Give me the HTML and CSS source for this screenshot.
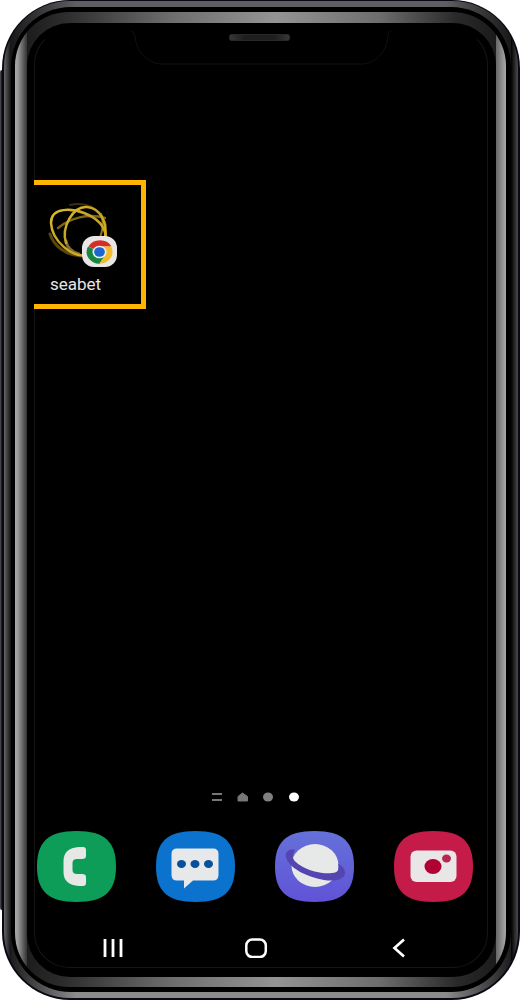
FILE: index.html
```
<!DOCTYPE html>
<html lang="en">
<head>
<meta charset="utf-8">
<meta name="viewport" content="width=device-width, initial-scale=1">
<title>Home screen</title>
<link rel="stylesheet" href="styles.css">
</head>
<body>
<div class="phone">
  <div class="rim">
    <div class="groove">
      <div class="bezel">
        <div class="glass">
          <main class="screen">
            <svg class="notch" viewBox="0 0 260 36" aria-hidden="true">
              <path d="M0 1Q3 1 4 6C5 22 17 34 31 34H230C244 34 256 22 257 6Q257 1 260 1" fill="none" stroke="#111"/>
              <defs><linearGradient id="speaker"><stop stop-color="#383838"/><stop offset=".25" stop-color="#1e1e1e"/><stop offset=".75" stop-color="#1e1e1e"/><stop offset="1" stop-color="#383838"/></linearGradient></defs>
              <rect x="98.500" y="4.500" width="60" height="6" rx="2" fill="url(#speaker)" stroke="#292929"/>
            </svg>
            <a class="shortcut" href="#seabet">
              <svg class="shortcut-icon" viewBox="0 0 72 68" aria-hidden="true">
                <defs><linearGradient id="gold" x2="1" y2="1"><stop stop-color="#e0be22"/><stop offset=".45" stop-color="#c3a12a"/><stop offset="1" stop-color="#e0b416"/></linearGradient></defs>
                <g fill="none" stroke-linecap="round">
                  <path d="M24 4C42 0 56 9 60 24" stroke="#3b3008" stroke-width="2"/>
                  <path d="M4 33C8 45 19 54 35 55" stroke="#5a480b" stroke-width="3"/>
                  <path d="M12 27C24 17 42 12 59 17" stroke="#7d6512" stroke-width="2.500"/>
                  <path d="M20 40C21 46 26 51 33 53" stroke="#7f6c30" stroke-width="3"/>
                  <path d="M55 13Q59 22 54 37" stroke="#8f7424" stroke-width="2"/>
                  <path d="M41 54C26 57 6 40 5 22C5 5 27 8 38 12C51 17 59 25 60 36" stroke="url(#gold)" stroke-width="2.500"/>
                  <path d="M20 42C15 26 27 5 41 6C53 7 62 20 59 37" stroke="url(#gold)" stroke-width="2.500"/>
                </g>
                <rect x="36" y="35" width="35" height="31" rx="12" fill="#e9e6e5"/>
                <g transform="translate(53.5 51) scale(1 .9)">
                  <path d="M0 0L-11 -6A13 13 0 0 1 12 -6H0Z" fill="#d32f27"/>
                  <path d="M0 0L-11.5 -6A13 13 0 0 0 0 13L6 3Z" fill="#168740"/>
                  <path d="M0 -6H11.6A13 13 0 0 1 0 13L6 3Z" fill="#f3bb28"/>
                  <circle r="7" fill="#eee"/><circle r="5.4" fill="#1d66d2"/>
                </g>
              </svg>
              <span class="shortcut-name">seabet</span>
            </a>
            <div class="lower">
              <svg class="pages" viewBox="0 0 88 12" aria-hidden="true">
                <path d="M1 3H11M1 9H11" stroke="#777" stroke-width="2"/>
                <path d="M27 5.500L31.500 2L36.500 5.500V10H27Z" fill="#777" stroke="#777" stroke-linejoin="round"/>
                <ellipse cx="57" cy="6" rx="5" ry="4.500" fill="#808080"/>
                <ellipse cx="83" cy="6" rx="5" ry="4.500" fill="#fff"/>
              </svg>
              <nav class="dock" aria-label="Apps">
                <a href="#phone" aria-label="Phone"><svg class="app" viewBox="0 0 79 72"><path d="M0 35.500C0 11 11 0 39.500 0S79 11 79 35.500S68 71 39.500 71S0 60 0 35.500Z" fill="#0d9d58"/><path d="M46 16Q49 16 49 19V25Q49 28 45 28H40Q35.500 28 35.500 32V39Q35.500 43 40 43H45Q49 43 49 46V52Q49 55 46 55H42Q26.500 54 26.500 41V30Q26.500 17 42 16Z" fill="#e6e8e6"/></svg></a>
                <a href="#messages" aria-label="Messages"><svg class="app" viewBox="0 0 79 72"><path d="M0 35.500C0 11 11 0 39.500 0S79 11 79 35.500S68 71 39.500 71S0 60 0 35.500Z" fill="#0b72cd"/><path d="M21 17.500H57Q62.500 17.500 62.500 23V44Q62.500 49.500 57 49.500H37L28 57.500V49.500H21Q15.500 49.500 15.500 44V23Q15.500 17.500 21 17.500Z" fill="#e6e8ea"/><g fill="#064f9d"><ellipse cx="25.500" cy="33" rx="4.500" ry="4"/><ellipse cx="39" cy="33" rx="4.500" ry="4"/><ellipse cx="52.500" cy="33" rx="4.500" ry="4"/></g></svg></a>
                <a href="#internet" aria-label="Internet"><svg class="app" viewBox="0 0 79 72"><defs><linearGradient id="sky" x2="0" y2="1"><stop stop-color="#6471d8"/><stop offset="1" stop-color="#6153d7"/></linearGradient></defs><path d="M0 35.500C0 11 11 0 39.500 0S79 11 79 35.500S68 71 39.500 71S0 60 0 35.500Z" fill="url(#sky)"/><ellipse cx="40" cy="34.500" rx="23.500" ry="21.500" fill="#e7e8e8"/><path d="M20 19C13 17 10 22 11 26C13 36 31 46 49 49C61 51 70 48 70 42C70 38 67 34 63 33C65 38 63 42 57 42C43 44 24 36 19 29C17 26 18 22 20 19Z" fill="#5545b1"/></svg></a>
                <a href="#camera" aria-label="Camera"><svg class="app" viewBox="0 0 79 72"><path d="M0 35.500C0 11 11 0 39.500 0S79 11 79 35.500S68 71 39.500 71S0 60 0 35.500Z" fill="#c51b48"/><rect x="16.500" y="19.500" width="46" height="31.500" rx="6" fill="#e8e6e7"/><ellipse cx="39" cy="35.500" rx="8.500" ry="7.500" fill="#b10033"/><ellipse cx="52.500" cy="27.500" rx="4.500" ry="4" fill="#b8284e"/></svg></a>
              </nav>
              <nav class="keys" aria-label="Navigation">
                <button class="key" type="button" aria-label="Recent apps"><svg viewBox="0 0 24 20"><path d="M4 1V19M12 1V19M20 1V19" stroke="#fff" stroke-width="2.800"/></svg></button>
                <button class="key" type="button" aria-label="Home"><svg viewBox="0 0 24 20"><rect x="2.300" y="1.500" width="19.500" height="17.500" rx="6" fill="none" stroke="#fff" stroke-width="2.500"/></svg></button>
                <button class="key" type="button" aria-label="Back"><svg viewBox="0 0 24 20"><path d="M17 1.500L7.500 10L17 18.500" fill="none" stroke="#fff" stroke-width="2.700"/></svg></button>
              </nav>
            </div>
          </main>
        </div>
      </div>
    </div>
  </div>
</div>
</body>
</html>
```
FILE: styles.css
```
* { box-sizing: border-box; }

body {
  margin: 0;
  min-height: 100vh;
  display: flex;
  padding: 0 10px 4px 0;
  background: #fff;
  font-family: Roboto, "Liberation Sans", sans-serif;
}

.phone, .rim, .groove, .bezel, .glass, .screen {
  flex: 1;
  display: flex;
  min-width: 0;
}

.phone {
  margin-left: 2px;
  padding: 1px 2px 2px;
  border-radius: 68px;
  background: #0b0815;
  position: relative;
}

/* side buttons */
.phone::before {
  content: "";
  position: absolute;
  left: -2px;
  top: 7%;
  bottom: 9%;
  width: 2px;
  border-radius: 2px 0 0 2px;
  background: linear-gradient(90deg, #555, #0b0815);
}

.rim {
  padding: 6px 7px;
  border-radius: 66px;
  background:
    linear-gradient(90deg, #666, #111) left / 7px 100% no-repeat,
    linear-gradient(90deg, #000, #4c4c4c) right / 7px 100% no-repeat,
    linear-gradient(90deg, #111, transparent 14%, transparent 86%, #111),
    linear-gradient(#5f5e60, #5f5e60 50%, #8b8b8b 51%);
}

.groove {
  padding: 5px 5px 5px 4px;
  border-radius: 60px;
  background: #000;
}

.bezel {
  padding: 11px 10px 10px 12px;
  border-radius: 54px;
  background:
    linear-gradient(90deg, #aaa, #999 25%, #333) left / 12px 100% no-repeat,
    linear-gradient(90deg, #666, #aaa) right / 10px 100% no-repeat,
    linear-gradient(90deg, #181818, #2c2c2c 10%, #6e6e6e 32%, #949494 53%, #6e6e6e 74%, #292929 90%, #181818);
}

.glass {
  padding: 6px 8px 9px 7px;
  border-radius: 43px;
  background: #000;
}

.screen {
  flex-direction: column;
  border: 1px solid #151515;
  border-top-color: #000;
  border-radius: 35px;
}

.notch {
  width: 260px;
  height: 36px;
  align-self: center;
}

.shortcut {
  align-self: flex-start;
  width: 112px;
  margin: 114px 0 24px -1px;
  padding: 16px 0 7px 12px;
  border: 5px solid #ffb400;
  border-left: 0;
  background: #000;
  display: flex;
  flex-direction: column;
  color: #e6e6e6;
  text-decoration: none;
}

.shortcut-icon {
  width: 72px;
  height: 68px;
}

.shortcut-name {
  margin-top: 3px;
  padding-left: 4px;
  font-size: 17px;
  line-height: 25px;
}

.lower {
  margin-top: auto;
  padding: 0 14px 9px 2px;
  display: flex;
  flex-direction: column;
}

.pages {
  width: 88px;
  height: 12px;
  align-self: center;
}

.dock {
  margin-top: 28px;
  display: flex;
  justify-content: space-between;
}

.app {
  display: block;
  width: 79px;
  height: 72px;
}

.keys {
  margin: 35px 3px 0 4px;
  display: grid;
  grid-template-columns: repeat(3, 1fr);
}

.key {
  border: 0;
  padding: 0;
  background: none;
  display: flex;
  justify-content: center;
}

.key svg {
  width: 24px;
  height: 20px;
}
```
